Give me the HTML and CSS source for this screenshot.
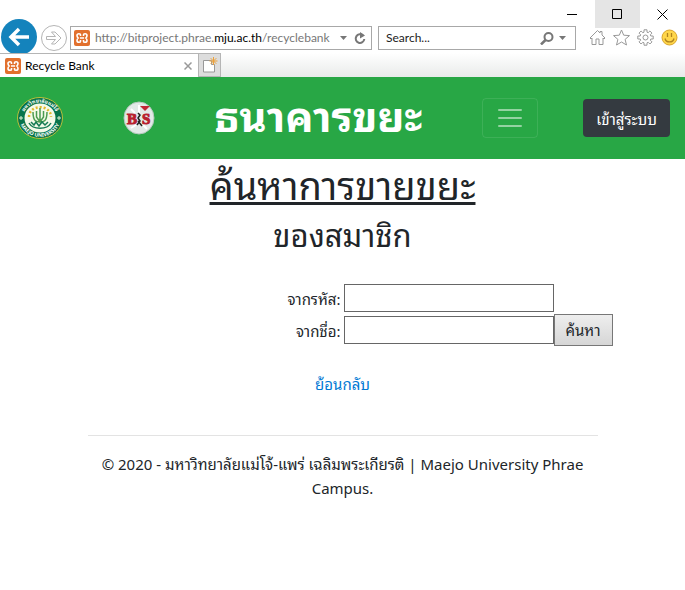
FILE: index.html
```html
<!DOCTYPE html>
<html lang="th">
<head>
  <meta charset="UTF-8" />
  <meta name="viewport" content="width=device-width, initial-scale=1.0"/>
  <title>Recycle Bank</title>
  <link rel="stylesheet" href="styles.css">
</head>
<body>
  <svg class="symbols" aria-hidden="true">
    <symbol id="favicon" viewBox="0 0 16 16">
      <rect width="16" height="16" rx="2" fill="#e2702d"/>
      <path d="M6.500 6V4.800Q6.500 3.700 5 3.700Q3 3.700 3 5.500Q3 7 4.200 8Q3 9 3 10.500Q3 12.300 5 12.300Q6.500 12.300 6.500 11.200V10M9.500 6V4.800Q9.500 3.700 11 3.700Q13 3.700 13 5.500Q13 7 11.800 8Q13 9 13 10.500Q13 12.300 11 12.300Q9.500 12.300 9.500 11.200V10M6 8h4" fill="none" stroke="#fff" stroke-width="1.600"/>
    </symbol>
  </svg>

  <div class="browser">
    <div class="titlebar">
      <button class="win-btn" aria-label="Minimize"><svg width="11" height="11"><path d="M0 5.5h10" stroke="#000"/></svg></button>
      <button class="win-btn active" aria-label="Maximize"><svg width="11" height="11"><path d="M.5.5h9v9h-9z" fill="none" stroke="#000"/></svg></button>
      <button class="win-btn" aria-label="Close"><svg width="11" height="11"><path d="M.5.5l10 10M10.5.5l-10 10" stroke="#000"/></svg></button>
    </div>

    <div class="toolbar">
      <button class="back" aria-label="Back"><svg width="22" height="20"><path d="M21 10H3M11 2L3 10l8 8" fill="none" stroke="#fff" stroke-width="3.500"/></svg></button>
      <button class="forward" aria-label="Forward"><svg width="26" height="26"><circle cx="13" cy="13" r="12.500" fill="#fff" stroke="#b4b4b4"/><path d="M5.500 11.500h9L10.500 7h3.500l6 6-6 6h-3.500l4-4.500h-9z" fill="none" stroke="#b4b4b4"/></svg></button>
      <div class="address">
        <svg class="favicon"><use href="#favicon"/></svg>
        <span class="url">http://bitproject.phrae.<b>mju.ac.th</b>/recyclebank</span>
        <svg class="caret" width="7" height="4"><path d="M0 0h7L3.500 4z" fill="#777"/></svg>
        <button aria-label="Refresh"><svg width="12" height="13"><path d="M9 3.500A4.300 4.300 0 1 0 10.300 7" fill="none" stroke="#777" stroke-width="2"/><path d="M6 0l5 3.500-5 3z" fill="#777"/></svg></button>
      </div>
      <div class="search">
        <input type="text" placeholder="Search..." aria-label="Search">
        <button aria-label="Go"><svg width="14" height="13"><circle cx="8.500" cy="5" r="4" fill="none" stroke="#777" stroke-width="2"/><path d="M5.500 8L1 12.500" stroke="#777" stroke-width="2.500"/></svg></button>
        <svg class="caret" width="7" height="4"><path d="M0 0h7L3.500 4z" fill="#777"/></svg>
      </div>
      <div class="tools">
        <button aria-label="Home"><svg width="17" height="17"><path d="M1 9l7.500-7.500L11 4V2.500h2V6l3 3-1 1-1-1v6.500h-4V10H7v5.500H3V9l-1 1z" fill="none" stroke="#999"/></svg></button>
        <button aria-label="Favorites"><svg width="17" height="17"><path d="M8.500 1l2.200 5.200 5.800.4-4.400 3.800 1.400 5.600-5-3-5 3 1.400-5.600L.5 6.600l5.800-.4z" fill="none" stroke="#999"/></svg></button>
        <button aria-label="Settings"><svg width="17" height="17" viewBox="0 0 17 17"><path d="M7 3.200V.8h3v2.400l1.200.5 1.700-1.700 2.100 2.100-1.700 1.700.5 1.200h2.400v3h-2.400l-.5 1.200 1.700 1.700-2.100 2.100-1.700-1.700-1.200.5v2.400H7v-2.400l-1.200-.5L4.100 15 2 12.900l1.700-1.700-.5-1.200H.8V7h2.400l.5-1.200L2 4.100 4.100 2l1.700 1.700z" fill="none" stroke="#999"/><circle cx="8.500" cy="8.500" r="2.500" fill="none" stroke="#999"/></svg></button>
        <button aria-label="Feedback"><svg width="17" height="17"><circle cx="8.500" cy="8.500" r="7.500" fill="#ffd64a" stroke="#d9a52b"/><path d="M6.500 4v4M10.500 4v4M4 9.500c1 4.500 8 4.500 9 0" fill="none" stroke="#b08420" stroke-width="1.300"/></svg></button>
      </div>
    </div>

    <div class="tabs">
      <div class="tab">
        <svg class="favicon"><use href="#favicon"/></svg>
        <span class="tab-title">Recycle Bank</span>
        <button aria-label="Close tab"><svg width="8" height="8"><path d="M.5.5l7 7M7.500.5l-7 7" stroke="#999" stroke-width="1.500"/></svg></button>
      </div>
      <button class="new-tab" aria-label="New tab"><svg width="16" height="16"><path d="M1.500 3.500h8v4h3v7.500h-11z" fill="#fff" stroke="#999"/><path d="M11.500 0v8M7.500 4h8M8.700 1.200l5.600 5.600M14.300 1.200L8.700 6.800" stroke="#eba13c"/></svg></button>
    </div>
  </div>

  <nav class="navbar">
    <svg class="seal" viewBox="0 0 46 42" role="img" aria-label="Maejo University">
      <defs><path id="ring-top" d="M6 21a17 15.500 0 0 1 34 0"/><path id="ring-bottom" d="M2.500 21a20.500 18.800 0 0 0 41 0"/></defs>
      <ellipse cx="23" cy="21" rx="22.500" ry="20.500" fill="#08744a" stroke="#b9bf3a"/>
      <text class="seal-text"><textPath href="#ring-top" startOffset="50%">มหาวิทยาลัยแม่โจ้</textPath></text>
      <text class="seal-text"><textPath href="#ring-bottom" startOffset="50%">MAEJO UNIVERSITY</textPath></text>
      <ellipse cx="23" cy="21" rx="15.500" ry="14.500" fill="#f4fae8"/>
      <path d="M12 20c0-13 22-13 22 0" fill="none" stroke="#dfb82b" stroke-width="2.500" stroke-dasharray="2 2"/>
      <path d="M23 11v14M16 15c0 10 4 10 7 10s7 0 7-10M19.500 14v6l3.500 5 3.500-5v-6" fill="none" stroke="#4b9b50" stroke-width="1.500"/>
      <path d="M12 26c4 7 18 7 22 0M14 25l3 3 2-3 3 4 3-4 3 3 3-3" fill="none" stroke="#167b54" stroke-width="1.500"/>
      <path d="M2 21h4M4 19v4M40 21h4M42 19v4" stroke="#dff1d1"/>
    </svg>
    <svg class="badge" viewBox="0 0 32 34" role="img" aria-label="BIS">
      <ellipse cx="16" cy="17" rx="15" ry="16" fill="#e2eae7" stroke="#b5c7bd"/>
      <path d="M16 4v8M8 8l4 4M8 27l5-3M24 28l-4-4" stroke="#fff" stroke-width="2"/>
      <text x="4" y="23" class="badge-text">B</text>
      <text x="19" y="23" class="badge-text">S</text>
      <path d="M17 5h10l-5 5z" fill="#c22535"/>
      <path d="M15 12l2 2-2 3 2 3-3 4M15 20l4 5" fill="none" stroke="#222" stroke-width="1.500"/>
    </svg>
    <a class="brand" href="#">ธนาคารขยะ</a>
    <div class="nav-actions">
      <button class="toggler" aria-label="Toggle navigation"><svg width="30" height="30" viewBox="0 0 30 30"><path d="M4 7h22M4 15h22M4 23h22" stroke="rgba(255,255,255,.5)" stroke-width="2" stroke-linecap="round"/></svg></button>
      <a class="login" href="#">เข้าสู่ระบบ</a>
    </div>
  </nav>

  <main class="container">
    <h1>ค้นหาการขายขยะ</h1>
    <h2>ของสมาชิก</h2>
    <form>
      <div class="row">
        <label for="code">จากรหัส:</label>
        <input type="text" id="code">
      </div>
      <div class="row">
        <label for="name">จากชื่อ:</label>
        <input type="text" id="name">
        <button class="submit" type="submit">ค้นหา</button>
      </div>
    </form>
    <a class="return" href="#">ย้อนกลับ</a>
    <footer>© 2020 - มหาวิทยาลัยแม่โจ้-แพร่ เฉลิมพระเกียรติ | Maejo University Phrae Campus.</footer>
  </main>
</body>
</html>
```

FILE: styles.css
```css
* {
  box-sizing: border-box;
}
body {
  margin: 0;
  font-family: "Noto Sans", "Noto Sans Thai Looped", "Loma", "Noto Sans Thai", sans-serif;
  font-size: 15px;
  line-height: 24px;
  color: #212529;
  background: #fff;
}
button {
  padding: 0;
  border: 0;
  background: none;
  font: inherit;
  color: inherit;
}
svg {
  display: block;
  flex-shrink: 0;
}
.symbols {
  position: absolute;
  width: 0;
  height: 0;
}

/* browser window */
.browser {
  font-family: Lato, "Open Sans", sans-serif;
  font-size: 12px;
}
.titlebar {
  display: flex;
  justify-content: flex-end;
  height: 26px;
}
.win-btn {
  display: flex;
  align-items: center;
  justify-content: center;
  width: 45px;
  height: 28px;
}
.win-btn.active {
  background: #e5e5e5;
}
.toolbar {
  display: flex;
  align-items: flex-start;
  height: 27px;
  padding: 0 7px 0 1px;
}
.back {
  display: flex;
  align-items: center;
  justify-content: center;
  width: 36px;
  height: 36px;
  margin: -7px 4px 0 0;
  border-radius: 50%;
  background: #1483bc;
}
.forward {
  margin: -1px 3px 0 0;
}
.address, .search {
  display: flex;
  align-items: center;
  height: 24px;
  border: 1px solid #a8a8a8;
  background: #fff;
}
.address {
  flex: 1;
  gap: 5px;
  min-width: 0;
  margin-right: 6px;
  padding: 0 5px 0 3px;
}
.favicon {
  width: 16px;
  height: 16px;
}
.url {
  flex: 1;
  overflow: hidden;
  white-space: nowrap;
  color: #777;
}
.url b {
  font-weight: normal;
  color: #000;
}
.address .caret {
  margin: 0 2px;
}
.search {
  flex: 0 1 198px;
  gap: 5px;
  min-width: 0;
  margin-right: 13px;
  padding: 0 9px 0 7px;
}
.search input {
  flex: 1;
  min-width: 0;
  height: 20px;
  padding: 0;
  border: 0;
  font: inherit;
}
.search input::placeholder {
  color: #222;
}
.tools {
  display: flex;
  gap: 7px;
  padding-top: 3px;
}
.tabs {
  display: flex;
  position: relative;
  height: 24px;
  background: linear-gradient(#fff, #e9ebea);
}
.tab {
  display: flex;
  align-items: center;
  gap: 4px;
  width: 198px;
  padding: 0 6px 0 5px;
  border-top: 1px solid #b5b5b5;
  background: #fff;
}
.tab-title {
  flex: 1;
  color: #000;
}
.new-tab {
  display: flex;
  align-items: center;
  justify-content: center;
  width: 23px;
  border: 1px solid #b5b5b5;
  background: #ddd;
}

/* page */
.navbar {
  display: flex;
  align-items: center;
  justify-content: space-between;
  height: 82px;
  padding: 0 15px 0 17px;
  background: #28a745;
}
.seal {
  width: 46px;
  height: 42px;
}
.seal-text {
  font-size: 5px;
  font-weight: bold;
  fill: #fff;
  text-anchor: middle;
}
.badge {
  width: 32px;
  height: 34px;
}
.badge-text {
  font: bold 15px "Liberation Serif", serif;
  fill: #b81f2f;
  stroke: #b81f2f;
}
.brand {
  padding-bottom: 4px;
  font-size: 42px;
  font-weight: bold;
  color: #fff;
  text-decoration: none;
}
.nav-actions {
  display: flex;
  align-items: center;
  gap: 45px;
}
.toggler {
  display: flex;
  align-items: center;
  justify-content: center;
  width: 56px;
  height: 40px;
  border: 1px solid rgba(255,255,255,.1);
  border-radius: 4px;
}
.login {
  padding: 8px 13px 6px;
  border-radius: 4px;
  background: #343a40;
  color: #fff;
  text-decoration: none;
}
.container {
  max-width: 540px;
  margin: 0 auto;
  text-align: center;
}
h1, h2 {
  margin: 0;
  font-weight: normal;
}
h1 {
  padding-top: 2px;
  font-size: 38px;
  line-height: 48px;
  text-decoration: underline;
}
h2 {
  padding-top: 8px;
  font-size: 31px;
  line-height: 36px;
}
form {
  display: grid;
  gap: 2px;
  padding-top: 31px;
}
.row {
  display: grid;
  grid-template-columns: 1fr 210px 59px;
  align-items: center;
}
.row label {
  padding: 2px 3px 0 0;
  text-align: right;
}
.row input {
  height: 28px;
  padding: 2px;
  border: 1px solid #666;
  font: inherit;
}
.submit {
  height: 32px;
  border: 1px solid #777;
  background: linear-gradient(#eee, #d6d6d6);
}
.return {
  display: inline-block;
  margin-top: 26px;
  color: #0078d4;
  text-decoration: none;
}
footer {
  margin: 39px 15px 0;
  padding: 16px 0;
  border-top: 1px solid #e3e3e3;
}
```
